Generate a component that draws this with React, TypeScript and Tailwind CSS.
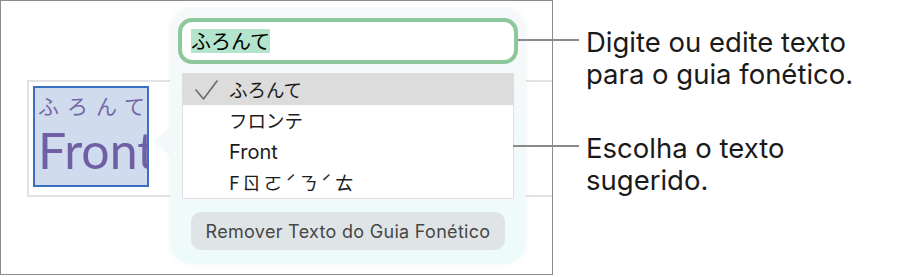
import React from 'react'

const ui = { fontFamily: 'Inter, "Noto Sans CJK JP", sans-serif' }
const jp = { fontFamily: '"Noto Sans CJK JP", Inter, sans-serif' }

const suggestions = ['ふろんて', 'フロンテ', 'Front', 'Fㄖㄛˊㄋˊㄊ']

function Check() {
  return (
    <svg width="24" height="22" viewBox="0 0 24 22" className="shrink-0">
      <path d="M1 11 L8.5 20 L22 2" fill="none" stroke="#6b6b6b" strokeWidth="1.6" strokeLinecap="round" strokeLinejoin="round" />
    </svg>
  )
}

function Popover() {
  return (
    <div className="absolute left-[169px] top-[7px] w-[356px] h-[256px]">
      {/* arrow toward the selected text */}
      <svg width="22" height="70" viewBox="0 0 22 70" className="absolute -left-[18px] top-[98px]">
        <path d="M22 0 C22 18 14 26 4 33 C1 35 1 36 4 38 C14 45 22 52 22 70 Z" fill="#f3f9f9" />
      </svg>
      <div className="h-full rounded-[22px] bg-gradient-to-b from-[#f6f8f9] to-[#eefbfb] shadow-[0_0_6px_rgba(0,0,0,0.04)] px-[8px] pt-[10px] flex flex-col">
        <div className="h-[46px] rounded-[14px] border-[4px] border-[#8dc89c] bg-white flex items-center px-[9px]">
          <span className="bg-[#b3e5cc] text-[20px] leading-[24px] text-black" style={jp}>ふろんて</span>
        </div>
        <div className="mt-[9px] mx-[4px] border border-[#dedede] bg-white">
          {suggestions.map((s, i) => (
            <div
              key={s}
              className={`h-[31px] flex items-center pl-[12px] ${i === 0 ? 'bg-[#dcdcdc]' : ''}`}
            >
              <div className="w-[34px]">{i === 0 && <Check />}</div>
              {i === 2 ? (
                <span className="text-[20px] text-[#1c1c1c]" style={ui}>{s}</span>
              ) : (
                <span className={`text-[18.5px] text-[#1c1c1c] ${i === 3 ? 'tracking-[3px]' : ''}`} style={jp}>{s}</span>
              )}
            </div>
          ))}
        </div>
        <button
          className="mt-[13px] mx-[13px] h-[38px] rounded-[10px] bg-[#dfe5e6] text-[18px] tracking-[0.3px] text-[#474747] flex items-center justify-center whitespace-nowrap"
          style={ui}
        >
          Remover Texto do Guia Fonético
        </button>
      </div>
    </div>
  )
}

export default function App() {
  return (
    <div className="relative w-[902px] h-[277px] bg-white flex" style={ui}>
      <div className="relative w-[553px] h-[275px] border border-[#8c8c8c] overflow-hidden shrink-0">
        <div className="mt-[79px] ml-[26px] w-[560px] h-[117px] border-2 border-[#e2e2e2] p-[4px]">
          <div className="w-[116px] h-[101px] border-2 border-[#3b6fc1] bg-[#d0dbed] overflow-hidden pl-[3px]">
            <div className="text-[21px] leading-[26px] mt-[4px] tracking-[8px] whitespace-nowrap text-[#7667a8]" style={jp}>
              ふろんて
            </div>
            <div className="text-[50px] leading-[58px] text-[#6f5fa5] whitespace-nowrap mt-[3px]" style={{ fontFamily: 'Lato, sans-serif' }}>
              Front
            </div>
          </div>
        </div>
        <Popover />
      </div>

      <div className="absolute left-[518px] top-[39px] w-[61px] h-[2px] bg-[#8a8a8a]" />
      <div className="absolute left-[513px] top-[145px] w-[66px] h-[2px] bg-[#8a8a8a]" />

      <div className="ml-[33px] pt-[26px] text-[27.5px] leading-[32px] text-[#1a1a1a] whitespace-nowrap">
        <p>Digite ou edite texto<br />para o guia fonético.</p>
        <p className="mt-[42px]">Escolha o texto<br />sugerido.</p>
      </div>
    </div>
  )
}
